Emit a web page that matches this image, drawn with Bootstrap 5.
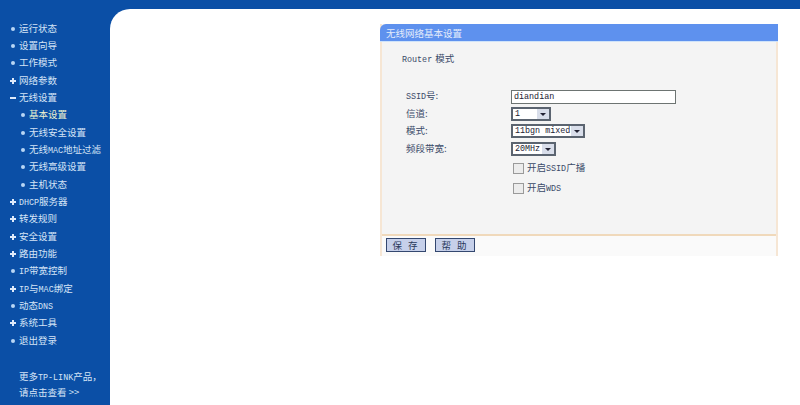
<!DOCTYPE html>
<html lang="en">
<head>
    <meta charset="UTF-8">
    <meta name="viewport" content="width=device-width, initial-scale=1">
    <title>无线网络基本设置</title>
    <link rel="stylesheet" href="https://cdn.jsdelivr.net/npm/bootstrap@5.3.0/dist/css/bootstrap.min.css">
    <style>
        html, body { height: 405px; overflow: hidden; }
        body { background: #0b4fa6; font-family: "Noto Sans CJK SC", "Liberation Sans", sans-serif; font-size: 9.5px; line-height: 1; }
        .lat { font-family: "Liberation Mono", monospace; font-size: 8.4px; }
        .shell { padding-top: 9px; height: 405px; }
        .side { width: 110px; flex: none; color: #d5e4f6; padding-top: 14.5px; }
        .side-item { height: 17.35px; padding-left: 19px; position: relative; }
        .side-item.sub { padding-left: 29px; }
        .side-item.cur { color: #eef3cf; }
        .side-item::before { content: ""; position: absolute; left: 11px; top: 3px; width: 4px; height: 4px; border-radius: 50%; background: #b9d6f5; }
        .side-item.sub::before { left: 21px; }
        .side-item.plus::before { left: 10px; top: 4px; width: 6px; height: 2px; border-radius: 0; background: #dfeafa; }
        .side-item.plus::after { content: ""; position: absolute; left: 12px; top: 2px; width: 2px; height: 6px; background: #dfeafa; }
        .side-item.minus::before { left: 10px; top: 4px; width: 6px; height: 2px; border-radius: 0; background: #dfeafa; }
        .side-more { padding: 15.5px 0 0 19px; line-height: 14.5px; color: #d5e4f6; }
        .main-area { background: #fff; border-top-left-radius: 20px; padding: 15px 0 0 270px; }
        .panel-box { width: 398px; height: 232px; background: #f4f4f4; border: solid #f6e6d4; border-width: 0 2px 2px; color: #3a4a68; }
        .panel-head { height: 18px; background: #5e91ee; color: #e4ecfb; border-top-left-radius: 6px; padding: 5px 0 0 4px; margin: 0 -2px 0 -2px; padding-left: 6px; border-bottom: 1px solid #cfe3fa; }
        .panel-body-in { height: 194px; padding: 12px 0 0 20px; border-bottom: 2px solid #f0d9bb; }
        .mode-title { height: 34px; }
        .mode-title .lat { margin-right: 3px; }
        .form-line { height: 17.3px; }
        .form-label-in { width: 109px; padding-left: 4px; flex: none; margin: 0; }
        .box-in { width: 165px; height: 14px; min-height: 0; border: 1px solid #6d7472; border-radius: 0; background: #fff; padding: 0 2px; color: #223; box-shadow: none; font-family: "Liberation Mono", monospace; font-size: 8.4px; }
        .pick { height: 14px; border: 2px solid #5b6470; border-radius: 0; padding: 0 12px 0 2px; line-height: 10px; color: #223; font-family: "Liberation Mono", monospace; font-size: 8.4px; box-shadow: none; background-color: #fff; background-repeat: no-repeat; background-position: right 0 center; background-size: 12px 10px; background-image: url("data:image/svg+xml,%3Csvg xmlns='http://www.w3.org/2000/svg' viewBox='0 0 12 10'%3E%3Crect width='12' height='10' fill='%23d9deea'/%3E%3Cpath d='M3 4h6L6 7z' fill='%23223'/%3E%3C/svg%3E"); }
        .pick-a { width: 40px; }
        .pick-b { width: 74px; }
        .pick-c { width: 45px; }
        .check-line { padding-left: 111px; height: 20px; min-height: 0; margin: 0; }
        .check-first { margin-top: 1.5px; }
        .check-line .form-check-input { width: 11px; height: 11px; margin: 0 3px 0 0; border: 1px solid #9a9a9a; border-radius: 0; background-color: #ececec; float: none; flex: none; }
        .check-line .form-check-label { color: #3a4a68; }
        .panel-foot { padding: 2px 0 0 4px; gap: 9px; background: #fafafa; height: 20px; }
        .btn-old { width: 40px; height: 14px; padding: 0; border: 1px solid #33476f; border-radius: 0; background: #c6d0ea; color: #2a3a5c; font-size: 9.5px; line-height: 12px; letter-spacing: 2px; }
    </style>
</head>
<body>
    <div class="shell d-flex">
        <nav class="side">
            <div class="side-item">运行状态</div>
            <div class="side-item">设置向导</div>
            <div class="side-item">工作模式</div>
            <div class="side-item plus">网络参数</div>
            <div class="side-item minus">无线设置</div>
            <div class="side-item sub cur">基本设置</div>
            <div class="side-item sub">无线安全设置</div>
            <div class="side-item sub">无线<span class="lat">MAC</span>地址过滤</div>
            <div class="side-item sub">无线高级设置</div>
            <div class="side-item sub">主机状态</div>
            <div class="side-item plus"><span class="lat">DHCP</span>服务器</div>
            <div class="side-item plus">转发规则</div>
            <div class="side-item plus">安全设置</div>
            <div class="side-item plus">路由功能</div>
            <div class="side-item"><span class="lat">IP</span>带宽控制</div>
            <div class="side-item plus"><span class="lat">IP</span>与<span class="lat">MAC</span>绑定</div>
            <div class="side-item">动态<span class="lat">DNS</span></div>
            <div class="side-item plus">系统工具</div>
            <div class="side-item">退出登录</div>
            <div class="side-more">更多<span class="lat">TP-LINK</span>产品，<br>请点击查看 &gt;&gt;</div>
        </nav>
        <main class="main-area flex-grow-1">
            <div class="panel-box">
                <div class="panel-head">无线网络基本设置</div>
                <form class="panel-body-in">
                    <div class="mode-title"><span class="lat">Router</span>模式</div>
                    <div class="d-flex align-items-center form-line">
                        <label class="form-label-in"><span class="lat">SSID</span>号:</label>
                        <input class="form-control box-in" type="text" value="diandian">
                    </div>
                    <div class="d-flex align-items-center form-line">
                        <label class="form-label-in">信道:</label>
                        <select class="form-select pick pick-a"><option>1</option></select>
                    </div>
                    <div class="d-flex align-items-center form-line">
                        <label class="form-label-in">模式:</label>
                        <select class="form-select pick pick-b"><option>11bgn mixed</option></select>
                    </div>
                    <div class="d-flex align-items-center form-line">
                        <label class="form-label-in">频段带宽:</label>
                        <select class="form-select pick pick-c"><option>20MHz</option></select>
                    </div>
                    <div class="form-check d-flex align-items-center check-line check-first">
                        <input class="form-check-input" type="checkbox" id="ssidBroadcast">
                        <label class="form-check-label" for="ssidBroadcast">开启<span class="lat">SSID</span>广播</label>
                    </div>
                    <div class="form-check d-flex align-items-center check-line">
                        <input class="form-check-input" type="checkbox" id="wdsOn">
                        <label class="form-check-label" for="wdsOn">开启<span class="lat">WDS</span></label>
                    </div>
                </form>
                <div class="panel-foot d-flex">
                    <button class="btn btn-old" type="button">保 存</button>
                    <button class="btn btn-old" type="button">帮 助</button>
                </div>
            </div>
        </main>
    </div>
    <script src="https://cdn.jsdelivr.net/npm/bootstrap@5.3.0/dist/js/bootstrap.bundle.min.js"></script>
</body>
</html>
